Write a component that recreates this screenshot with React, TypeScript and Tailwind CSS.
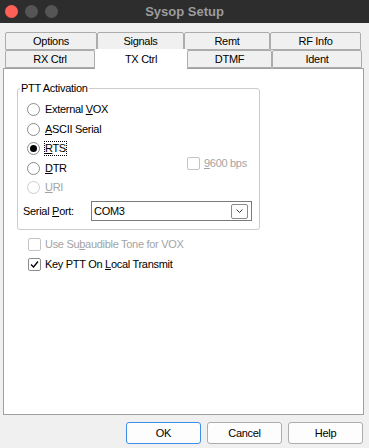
import type { ReactNode } from 'react'

// Windows-style dialog: "Sysop Setup" / TX Ctrl tab

function Radio({ children, checked = false, disabled = false, focus = false }: {
  children: ReactNode
  checked?: boolean
  disabled?: boolean
  focus?: boolean
}) {
  return (
    <div className="h-[19.5px] flex items-center gap-[5px]">
      <span
        className={`w-[13px] h-[13px] rounded-full border bg-white flex items-center justify-center shrink-0 ${
          disabled ? 'border-[#cccccc]' : 'border-[#8c8c8c]'
        }`}
      >
        {checked && <span className="w-[7px] h-[7px] rounded-full bg-black" />}
      </span>
      <span
        className={`leading-[13px] ${disabled ? 'text-[#a3a3a3]' : 'text-black'} ${
          focus ? 'outline outline-1 outline-dotted outline-black' : ''
        }`}
      >
        {children}
      </span>
    </div>
  )
}

function Check({ children, checked = false, disabled = false }: {
  children: ReactNode
  checked?: boolean
  disabled?: boolean
}) {
  return (
    <div className="flex items-center gap-[4px]">
      <span
        className={`w-[13px] h-[13px] rounded-[2px] border bg-white flex items-center justify-center shrink-0 ${
          disabled ? 'border-[#c4c4c4]' : 'border-[#8c8c8c]'
        }`}
      >
        {checked && (
          <svg width="9" height="9" viewBox="0 0 9 9">
            <polyline points="1,4.5 3.5,7 8,1.5" fill="none" stroke="#000" strokeWidth="1.3" />
          </svg>
        )}
      </span>
      <span className={`leading-[13px] ${disabled ? 'text-[#a3a3a3]' : 'text-black'}`}>{children}</span>
    </div>
  )
}

function Tab({ label, w }: { label: string; w: string }) {
  return (
    <div
      className={`${w} h-[18px] bg-[#f0f0f0] border border-[#acacac] rounded-t-[2px] flex items-center justify-center`}
    >
      {label}
    </div>
  )
}

function Button({ label, primary = false }: { label: string; primary?: boolean }) {
  return (
    <div
      className={`w-[75px] h-[22px] rounded-[3px] border bg-[#fdfdfd] flex items-center justify-center ${
        primary ? 'border-[#3d8ee8]' : 'border-[#adadad]'
      }`}
    >
      {label}
    </div>
  )
}

export default function App() {
  return (
    <div className="w-[369px] h-[448px] overflow-hidden bg-[#f0f0f0] text-[11px] tracking-[-0.3px] text-black font-['Liberation_Sans',Arial,sans-serif]">
      {/* Title bar */}
      <div className="h-[23px] bg-[#2d2d2d] grid grid-cols-[1fr_auto_1fr] items-center">
        <div className="flex gap-[7px] pl-[5px]">
          <span className="w-[13px] h-[13px] rounded-full bg-[#fe5f57]" />
          <span className="w-[13px] h-[13px] rounded-full bg-[#555555]" />
          <span className="w-[13px] h-[13px] rounded-full bg-[#555555]" />
        </div>
        <div className="font-bold text-[13px] tracking-normal text-[#9c9c9c]">Sysop Setup</div>
        <div />
      </div>

      {/* Tabs */}
      <div className="pt-[9px] pl-[5px]">
        <div className="flex">
          <Tab label="Options" w="w-[92px]" />
          <Tab label="Signals" w="w-[87px]" />
          <Tab label="Remt" w="w-[86px]" />
          <Tab label="RF Info" w="w-[91px]" />
        </div>
        <div className="flex">
          <Tab label="RX Ctrl" w="w-[90px]" />
          <div className="w-[92px] h-[20px] -mt-[1px] -mb-[1px] relative z-10 bg-white flex justify-center pt-[2px]">
            TX Ctrl
          </div>
          <Tab label="DTMF" w="w-[85px]" />
          <Tab label="Ident" w="w-[90px]" />
        </div>
      </div>

      {/* Tab page */}
      <div className="ml-[3px] w-[361px] h-[347px] bg-white border border-[#a0a0a0] pl-[13px]">
        <fieldset className="w-[243px] border border-[#cccccc] rounded-[3px] mt-[12px] pb-[8px]">
          <legend className="ml-[2px] px-[1px] leading-[14px]">PTT Activation</legend>

          <div className="flex pt-[5px] pl-[9px]">
            <div className="w-[150px]">
              <Radio>
                External <u>V</u>OX
              </Radio>
              <Radio>
                <u>A</u>SCII Serial
              </Radio>
              <Radio checked focus>
                <u>R</u>TS
              </Radio>
              <Radio>
                <u>D</u>TR
              </Radio>
              <Radio disabled>
                <u>U</u>RI
              </Radio>
            </div>
            <div className="ml-[10px] mt-[57px]">
              <Check disabled>
                <u>9</u>600 bps
              </Check>
            </div>
          </div>

          <div className="mt-[3.5px] pl-[5px] flex items-center h-[20px]">
            <span className="w-[68px]">
              Serial <u>P</u>ort:
            </span>
            <div className="w-[161px] h-[20px] border border-[#7a7a7a] flex items-center pl-[2px] pr-[3px]">
              <span>COM3</span>
              <span className="ml-auto w-[17px] h-[15px] border border-[#8a8a8a] rounded-[2px] flex items-center justify-center">
                <svg width="7" height="4" viewBox="0 0 7 4">
                  <polyline points="0.5,0.5 3.5,3.5 6.5,0.5" fill="none" stroke="#333" strokeWidth="1" />
                </svg>
              </span>
            </div>
          </div>
        </fieldset>

        <div className="mt-[4px] pl-[11px]">
          <div className="h-5 flex items-center">
            <Check disabled>
              Use Su<u>b</u>audible Tone for VOX
            </Check>
          </div>
          <div className="h-5 flex items-center">
            <Check checked>
              Key PTT On <u>L</u>ocal Transmit
            </Check>
          </div>
        </div>
      </div>

      {/* Dialog buttons */}
      <div className="mt-[7px] flex justify-end gap-[6px] pr-[6px]">
        <Button label="OK" primary />
        <Button label="Cancel" />
        <Button label="Help" />
      </div>
    </div>
  )
}
